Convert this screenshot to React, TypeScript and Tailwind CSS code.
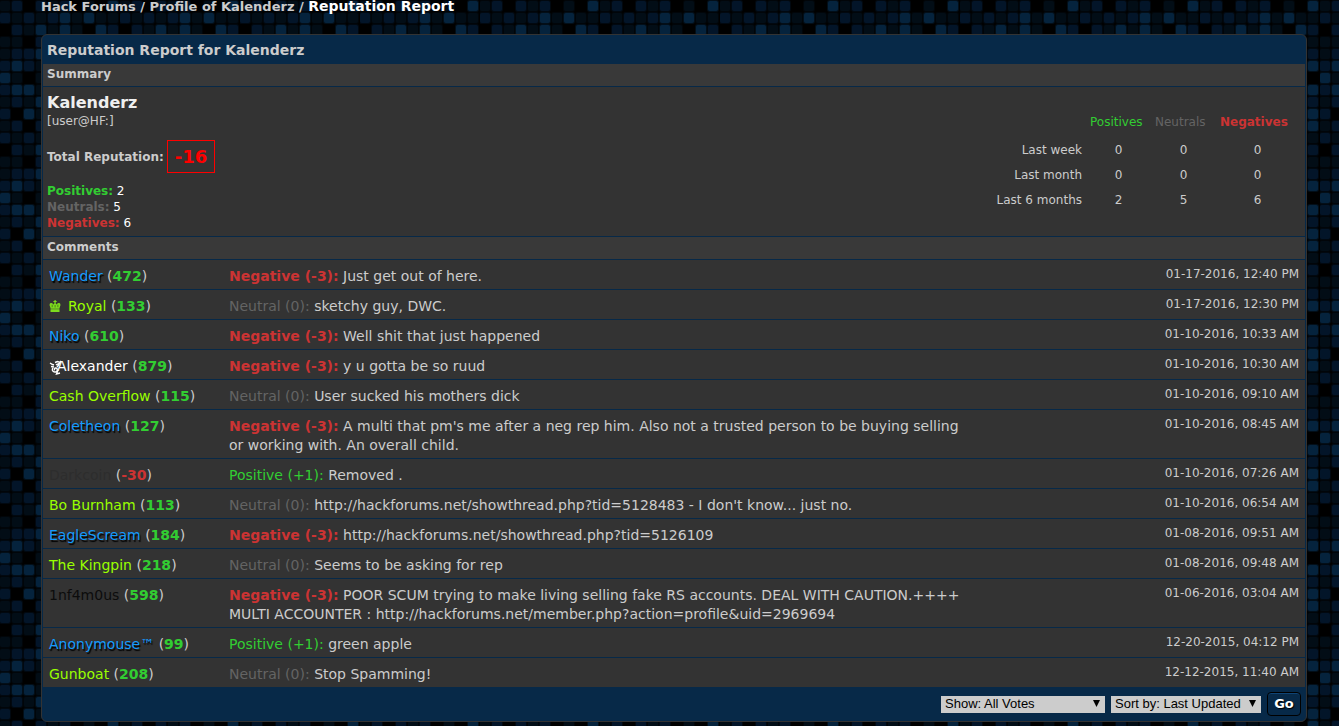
import React from 'react';

type Vote = 'positive' | 'neutral' | 'negative';

interface Comment {
  name: string;
  group: string;
  icon?: 'crown' | 'swirl';
  rep: number;
  vote: Vote;
  text: string;
  date: string;
}

const groups: Record<string, string> = {
  ub3r: 'text-[#149cff] [text-shadow:1px_2px_1px_#000]',
  l33t: 'text-[#99ff00]',
  staff: 'text-white',
  closed: 'text-[#2d2d2d]',
  black: 'text-[#0c0c0c]',
};

const voteStyles: Record<Vote, string> = {
  positive: 'text-[#32cd32]',
  neutral: 'text-[#646464]',
  negative: 'font-bold text-[#cc3333]',
};

const voteLabels: Record<Vote, string> = {
  positive: 'Positive (+1):',
  neutral: 'Neutral (0):',
  negative: 'Negative (-3):',
};

const comments: Comment[] = [
  { name: 'Wander', group: 'ub3r', rep: 472, vote: 'negative', text: 'Just get out of here.', date: '01-17-2016, 12:40 PM' },
  { name: 'Royal', group: 'l33t', icon: 'crown', rep: 133, vote: 'neutral', text: 'sketchy guy, DWC.', date: '01-17-2016, 12:30 PM' },
  { name: 'Niko', group: 'ub3r', rep: 610, vote: 'negative', text: 'Well shit that just happened', date: '01-10-2016, 10:33 AM' },
  { name: 'Alexander', group: 'staff', icon: 'swirl', rep: 879, vote: 'negative', text: 'y u gotta be so ruud', date: '01-10-2016, 10:30 AM' },
  { name: 'Cash Overflow', group: 'l33t', rep: 115, vote: 'neutral', text: 'User sucked his mothers dick', date: '01-10-2016, 09:10 AM' },
  { name: 'Coletheon', group: 'ub3r', rep: 127, vote: 'negative', text: "A multi that pm's me after a neg rep him. Also not a trusted person to be buying selling or working with. An overall child.", date: '01-10-2016, 08:45 AM' },
  { name: 'Darkcoin', group: 'closed', rep: -30, vote: 'positive', text: 'Removed .', date: '01-10-2016, 07:26 AM' },
  { name: 'Bo Burnham', group: 'l33t', rep: 113, vote: 'neutral', text: "http://hackforums.net/showthread.php?tid=5128483 - I don't know... just no.", date: '01-10-2016, 06:54 AM' },
  { name: 'EagleScream', group: 'ub3r', rep: 184, vote: 'negative', text: 'http://hackforums.net/showthread.php?tid=5126109', date: '01-08-2016, 09:51 AM' },
  { name: 'The Kingpin', group: 'l33t', rep: 218, vote: 'neutral', text: 'Seems to be asking for rep', date: '01-08-2016, 09:48 AM' },
  { name: '1nf4m0us', group: 'black', rep: 598, vote: 'negative', text: 'POOR SCUM trying to make living selling fake RS accounts. DEAL WITH CAUTION.++++ MULTI ACCOUNTER : http://hackforums.net/member.php?action=profile&uid=2969694', date: '01-06-2016, 03:04 AM' },
  { name: 'Anonymouse™', group: 'ub3r', rep: 99, vote: 'positive', text: 'green apple', date: '12-20-2015, 04:12 PM' },
  { name: 'Gunboat', group: 'l33t', rep: 208, vote: 'neutral', text: 'Stop Spamming!', date: '12-12-2015, 11:40 AM' },
];

const periods = [
  { label: 'Last week', values: [0, 0, 0] },
  { label: 'Last month', values: [0, 0, 0] },
  { label: 'Last 6 months', values: [2, 5, 6] },
];

// brightness of each square in the repeating 10x10 tile
const tile = [
  '1202120103',
  '2121231311',
  '0213131032',
  '1102121021',
  '1223012132',
  '2321120123',
  '3101213210',
  '2331021203',
  '1213120312',
  '2031213013',
];
const shades = ['#000000', '#020d16', '#031529', '#05233d'];

const Backdrop = () => (
  <svg className="absolute inset-0 -z-10 h-full w-full" aria-hidden="true">
    <defs>
      <pattern id="squares" width="120" height="120" patternUnits="userSpaceOnUse">
        <rect width="120" height="120" fill="#000" />
        {tile.map((row, y) =>
          row.split('').map((c, x) =>
            c === '0' ? null : (
              <g key={`${x}-${y}`} fill={shades[Number(c)]}>
                <rect x={x * 12 - 1} y={y * 12} width="12" height="12" rx="3" opacity="0.4" />
                <rect x={x * 12} y={y * 12 + 1} width="10" height="10" rx="2" />
              </g>
            )
          )
        )}
      </pattern>
    </defs>
    <rect width="100%" height="100%" fill="url(#squares)" />
  </svg>
);

const CrownIcon = () => (
  <svg className="mr-[7px] inline-block h-3 w-3 align-[-1px]" viewBox="0 0 12 12" fill="#7ddc1e" aria-hidden="true">
    <path d="M5.500 0h1.200v1h1v1h-1v1.500l.8 1L9 3l2 .3.500 1.700L10.500 8v.8h-9V8L.5 5l.5-1.700L3 3l1.500 1.500.9-1V2h-1V1h1.100z" />
    <path d="M1.500 9.200h9V12h-9z" />
    <path d="M3.200 4.700v2.500M8.900 4.700v2.500M6.100 5v2.500" stroke="#2b4518" strokeWidth="0.6" />
  </svg>
);

const SwirlIcon = () => (
  <svg className="-mr-2 inline-block h-4 w-4 align-[-4px]" viewBox="0 0 16 16" fill="none" stroke="#fff" strokeWidth="1.4" aria-hidden="true">
    <path d="M1 4l2.500 1.500L5 6M2 7.500l3 .5M6 3.500l2.500-1L11 3.500l1-1.500M4 9c-1.500 2 0 4.500 2.500 4 2-.5 2.500-3.500.5-4-1.500-.3-2 1.500-1 2M7 6c2-1.500 4-1 4.500-3M8 8l2.500-3M9 11l-1.500 4 3.500-1" />
  </svg>
);

const Select = ({ id, label, width, options }: { id: string; label: string; width: string; options: string[] }) => (
  <div className={`relative ${width}`}>
    <select
      id={id}
      aria-label={label}
      className="block h-[17px] w-full appearance-none bg-[#cccccc] pl-1 font-['Liberation_Sans',sans-serif] text-[13px] leading-4 text-black"
    >
      {options.map((o) => (
        <option key={o}>{o}</option>
      ))}
    </select>
    <svg className="pointer-events-none absolute top-1 right-[5px] h-[7px] w-[7px]" viewBox="0 0 8 8" fill="#000" aria-hidden="true">
      <path d="M0 0h8L4 8z" />
    </svg>
  </div>
);

export default function App() {
  return (
    <div className="relative isolate min-h-screen overflow-hidden bg-black pr-8 pb-1 pl-[41px] font-['DejaVu_Sans',Verdana,sans-serif] text-xs leading-4 text-[#cccccc]">
      <Backdrop />

      {/* Breadcrumb */}
      <nav className="mb-[21px] text-[13px] leading-3 font-bold">
        <a href="#">Hack Forums</a> / <a href="#">Profile of Kalenderz</a> / <span className="text-sm leading-3 text-white">Reputation Report</span>
      </nav>

      <main className="rounded-md border border-[#333333] bg-[#072948] px-px">
        <h1 className="px-1 pt-1.5 pb-1 text-sm leading-[19px] font-bold">Reputation Report for Kalenderz</h1>

        <h2 className="bg-[#393939] px-1 pt-[2px] pb-1 font-bold">Summary</h2>
        <section className="mt-px flex items-center justify-between bg-[#333333] pr-1.5 pl-1">
          <div className="pt-1.5 pb-[5px]">
            <p className="text-base leading-5 font-bold text-[#efefef]">Kalenderz</p>
            <p>[user@HF:]</p>
            <p className="mt-[11px] mb-2.5 flex items-center gap-[3px] font-bold">
              Total Reputation:
              <span className="border border-[#ff0000] px-[7px] py-1.5 text-lg leading-[19px] text-[#ff0000]">-16</span>
            </p>
            <p className="text-white"><strong className="text-[#32cd32]">Positives:</strong> 2</p>
            <p className="text-white"><strong className="text-[#646464]">Neutrals:</strong> 5</p>
            <p className="text-white"><strong className="text-[#cc3333]">Negatives:</strong> 6</p>
          </div>
          <table className="text-center">
            <thead>
              <tr className="h-[27px] text-left">
                <td className="w-[110px]" />
                <th scope="col" className="w-[65px] pb-1 pl-1 font-normal text-[#32cd32]">Positives</th>
                <th scope="col" className="w-[65px] pb-1 pl-1 font-normal text-[#646464]">Neutrals</th>
                <th scope="col" className="w-[83px] pb-1 pl-1 font-bold text-[#cc3333]">Negatives</th>
              </tr>
            </thead>
            <tbody>
              {periods.map((p) => (
                <tr key={p.label} className="h-[25px]">
                  <th scope="row" className="pr-1 text-right font-normal">{p.label}</th>
                  {p.values.map((v, i) => (
                    <td key={i}>{v}</td>
                  ))}
                </tr>
              ))}
            </tbody>
          </table>
        </section>

        <h2 className="mt-px bg-[#393939] px-1 pt-[2px] pb-1 font-bold">Comments</h2>
        <table className="w-full table-fixed border-collapse">
          <tbody>
            {comments.map((c) => (
              <tr key={c.name} className="border-t border-[#072948] bg-[#333333] align-top text-sm leading-[19px]">
                <td className="w-[186px] pt-[7px] pb-[3px] pl-1.5">
                  {c.icon === 'crown' && <CrownIcon />}
                  {c.icon === 'swirl' && <SwirlIcon />}
                  <a href="#" className={groups[c.group]}>{c.name}</a>{' '}
                  (<a href="#" className={c.rep < 0 ? 'font-bold text-[#cc3333]' : 'font-bold text-[#32cd32]'}>{c.rep}</a>)
                </td>
                <td className="pt-[7px] pb-[3px]">
                  <span className={voteStyles[c.vote]}>{voteLabels[c.vote]}</span> {c.text}
                </td>
                <td className="w-[335px] pt-1.5 pr-1.5 text-right text-xs leading-4">{c.date}</td>
              </tr>
            ))}
          </tbody>
        </table>

        <form className="flex items-center justify-end gap-1.5 py-[5px] pr-1">
          <Select id="show" label="Show" width="w-[164px]" options={['Show: All Votes', 'Show: Positive Votes']} />
          <Select id="sort" label="Sort by" width="w-[150px]" options={['Sort by: Last Updated', 'Sort by: Username']} />
          <button
            type="button"
            className="h-6 w-[34px] rounded-sm border border-black bg-[#072948] text-[13px] leading-5 font-bold text-white [text-shadow:1px_1px_1px_#000] shadow-[inset_0_1px_0_#0f4475]"
          >
            Go
          </button>
        </form>
      </main>
    </div>
  );
}
